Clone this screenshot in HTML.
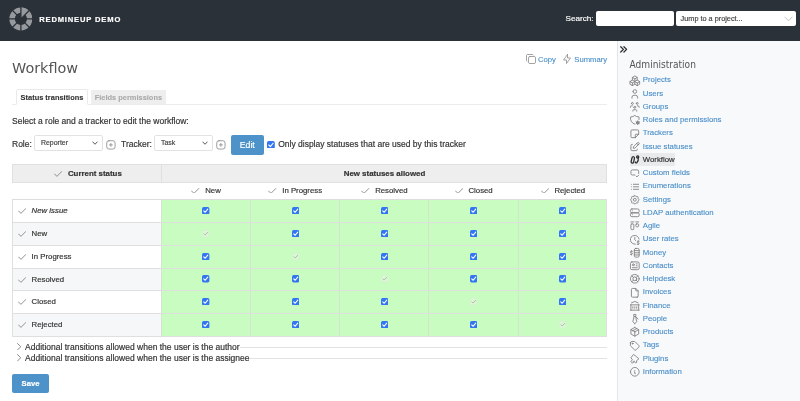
<!DOCTYPE html>
<html lang="en"><head><meta charset="utf-8"><title>Workflow - Redmineup Demo</title>
<style>
*{box-sizing:border-box;margin:0;padding:0}
html,body{width:800px;height:401px;overflow:hidden;background:#fff}
#wrap{position:absolute;left:0;top:0;width:800px;height:401px;will-change:transform;transform:translateZ(0)}
body{font-family:"Liberation Sans",Arial,sans-serif;font-size:8.500px;color:#333;position:relative;-webkit-text-stroke:.18px}
a{color:#478dc9;-webkit-text-stroke:.1px;text-decoration:none}
#header{position:absolute;left:0;top:0;width:800px;height:41px;background:#2b3138}
#logo{position:absolute;left:8.600px;top:7.100px}
#title{position:absolute;left:39.200px;top:13.900px;height:12px;line-height:12px;color:#fff;font-weight:bold;font-size:7.600px;letter-spacing:.830px;white-space:nowrap}
#slabel{position:absolute;left:565.600px;top:11.500px;height:14px;line-height:14px;color:#fff;font-size:8.100px}
#q{position:absolute;left:596px;top:11px;width:78px;height:15px;background:#fff;border-radius:2px}
#jump{position:absolute;left:676px;top:11px;width:120px;height:15px;background:#fff;border-radius:2px;font-size:7.300px;line-height:15px;padding-left:4.600px;color:#444}
#jump svg{position:absolute;right:3.500px;top:4.800px}
#sidebar{position:absolute;left:617px;top:41px;width:183px;height:360px;background:#f8f9fa;border-left:1px solid #e2e5e9}
#sidebar .tg{position:absolute;left:-.8px;top:2.100px}
#sidebar h3{position:absolute;left:11.500px;top:15.500px;font-family:"DejaVu Sans Condensed","DejaVu Sans","Liberation Sans",sans-serif;font-stretch:condensed;font-weight:normal;font-size:10.100px;line-height:16px;color:#555;-webkit-text-stroke:0}
#menu{position:absolute;left:12px;top:32px;list-style:none}
#menu li{height:14px;line-height:14px;white-space:nowrap;position:absolute;left:0;padding-left:12.800px;font-size:7.790px}
#menu li svg{position:absolute;left:-.7px;top:1px}
#menu li.cur span{background:#e8eaec;color:#333;padding:2.200px .8px 2.200px 13.300px;margin-left:-13.300px;border-radius:1px}
#menu li.cur svg{z-index:2}
h2{position:absolute;left:12px;top:56px;font-family:"DejaVu Sans","Liberation Sans",sans-serif;font-weight:normal;font-size:14.400px;line-height:24px;color:#555;-webkit-text-stroke:0}
#ctx{position:absolute;right:192.800px;top:52.500px;height:14px;line-height:14px;font-size:7.700px;white-space:nowrap}
#ctx a{margin-left:4.500px;position:relative;padding-left:13.900px;display:inline-block}
#ctx svg{position:absolute;left:.6px;top:.2px}
#tabs{position:absolute;left:12px;top:89px;width:595px;height:16px;border-bottom:1px solid #ececec}
#tabs a{position:absolute;top:0;height:16px;line-height:16px;font-weight:bold;font-size:7.450px;text-align:center;white-space:nowrap}
#tabs a.s{left:4px;width:72px;background:#fff;border:1px solid #eaeaea;border-bottom:1px solid #fff;color:#333;border-radius:2px 2px 0 0}
#tabs a.u{left:78.500px;width:75.800px;top:1px;background:#eee;color:#aaa;height:14px;line-height:15px;border-radius:1px 1px 0 0}
#p1{position:absolute;left:12px;top:113.500px;line-height:14px;white-space:nowrap}
.lab{position:absolute;top:137px;line-height:14px;white-space:nowrap}
.sel{position:absolute;top:135px;height:15.500px;border:1px solid #e2e2e2;border-radius:2px;background:#fff;font-size:6.950px;line-height:13.500px;padding-left:6px;color:#444}
.sel svg{position:absolute;right:4px;top:5px}
.plus{position:absolute;top:139.100px}
#edit{position:absolute;left:231px;top:135px;width:32.500px;height:19.500px;background:#4d92c9;border-radius:2px;color:#fff;font-size:8.700px;line-height:21px;text-align:center}
#only{position:absolute;left:267.300px;top:140.400px}
#tbl{position:absolute;left:12px;top:164px;width:595px;border-collapse:collapse}
.hr1{position:absolute;left:12px;top:164px;width:595px;height:18.500px;background:#eee;border:1px solid #e0e0e0}
.hr1 div{position:absolute;top:0;height:17px;line-height:17px;font-weight:bold;font-size:7.900px;text-align:center;white-space:nowrap;color:#333}
.hr2{position:absolute;top:181.600px;height:17px;line-height:17px;text-align:center;white-space:nowrap;font-size:7.800px}
.ck{vertical-align:-0.900px;margin-right:5.500px}
.row{position:absolute;left:12px;width:595px;border:1px solid #dfdfdf;border-top:none}
.row .st{position:absolute;left:0;top:0;width:149px;padding-left:4.800px;white-space:nowrap;font-size:7.800px}
.cell{position:absolute;top:0;background:#c9fcc1;border-left:1px solid #d3e4cf;border-top:0}
.cell svg{position:absolute;left:50%;margin-left:-3.700px}
.fs{position:absolute;left:12px;width:595px;height:1px;background:#e2e2e2}
.fl{position:absolute;left:12px;background:#fff;line-height:11px;height:11px;padding:0 .5px 0 5px;white-space:nowrap;font-size:8.500px}
.fl svg{margin-right:3.800px;vertical-align:-0.500px}
#save{position:absolute;left:12px;top:373.500px;width:37px;height:19.500px;background:#4d92c9;border-radius:2px;color:#fff;font-weight:bold;font-size:7.700px;line-height:19.500px;text-align:center}
</style></head><body><div id="wrap">

<div id="header"><svg id="logo" width="23.800" height="23.800" viewBox="0 0 25 25"><circle cx="12.5" cy="12.5" r="9.250" fill="none" stroke="#96999d" stroke-width="5.700"/><path d="M12.5 12.5L12.50 0.40A12.100 12.100 0 0 1 21.06 3.94Z" fill="#96999d"/><path d="M12.5 12.5L12.50 -1.00M12.5 12.5L22.05 2.95M12.5 12.5L26.00 12.50M12.5 12.5L22.05 22.05M12.5 12.5L12.50 26.00M12.5 12.5L2.95 22.05M12.5 12.5L-1.00 12.50M12.5 12.5L2.95 2.95" stroke="#2b3138" stroke-width="1.350" fill="none"/></svg>
<div id="title">REDMINEUP DEMO</div><div id="slabel">Search:</div><div id="q"></div><div id="jump">Jump to a project...<svg width="9" height="6" viewBox="0 0 9 6"><path d="M.6.800L4.500 4.800 8.400.800" fill="none" stroke="#b5b5b5" stroke-width=".8"/></svg></div></div>
<div id="sidebar"><svg class="tg" width="12.800" height="12.800" viewBox="0 0 24 24" fill="none" stroke="#2c2c2c" stroke-width="2.400" stroke-linecap="round" stroke-linejoin="round"><path d="M7 7l5 5-5 5M13 7l5 5-5 5"/></svg><h3>Administration</h3><ul id="menu">
<li style="top:0px"><svg width="11.600" height="11.600" viewBox="0 0 24 24" fill="none" stroke="#808080" stroke-width="1.850" stroke-linecap="round" stroke-linejoin="round" style="top:1.65px"><path d="M7 16.500l-5-3 5-3 5 3V19l-5 3zM2 13.500V19l5 3M7 16.545l5-3.030M17 16.500l-5-3 5-3 5 3V19l-5 3zM12 19l5 3M17 16.500l5-3M12 13.500V8L7 5l5-3 5 3v5.500M7 5.030v5.455M12 8l5-3"/></svg><a>Projects</a></li>
<li style="top:14px"><svg width="11.600" height="11.600" viewBox="0 0 24 24" fill="none" stroke="#808080" stroke-width="1.850" stroke-linecap="round" stroke-linejoin="round" style="top:0.90px"><path d="M8.200 7.200a3.800 3.800 0 1 0 7.600 0 3.800 3.800 0 0 0-7.600 0M6.200 21v-2a3.800 3.800 0 0 1 3.800-3.800h4a3.800 3.800 0 0 1 3.800 3.800v2"/></svg><a>Users</a></li>
<li style="top:27px"><svg width="11.600" height="11.600" viewBox="0 0 24 24" fill="none" stroke="#808080" stroke-width="1.850" stroke-linecap="round" stroke-linejoin="round" style="top:1.15px"><path d="M10 13a2 2 0 1 0 4 0 2 2 0 0 0-4 0M8 21v-1a2 2 0 0 1 2-2h4a2 2 0 0 1 2 2v1M15 5a2 2 0 1 0 4 0 2 2 0 0 0-4 0M17 10h2a2 2 0 0 1 2 2v1M5 5a2 2 0 1 0 4 0 2 2 0 0 0-4 0M3 13v-1a2 2 0 0 1 2-2h2"/></svg><a>Groups</a></li>
<li style="top:40px"><svg width="11.600" height="11.600" viewBox="0 0 24 24" fill="none" stroke="#808080" stroke-width="1.850" stroke-linecap="round" stroke-linejoin="round" style="top:1.40px"><path d="M12 21a12 12 0 0 1-8.500-15A12 12 0 0 0 12 3a12 12 0 0 0 8.500 3c.5 1.800.6 3.700.2 5.500"/><circle cx="18" cy="18" r="2.600" fill="#8a8a8a"/><path d="M18 14.200v1.200M18 20.600v1.200M21.300 16.100l-1 .6M15.700 19.300l-1 .6M14.700 16.100l1 .6M20.300 19.300l1 .6"/></svg><a>Roles and permissions</a></li>
<li style="top:53px"><svg width="11.600" height="11.600" viewBox="0 0 24 24" fill="none" stroke="#808080" stroke-width="1.850" stroke-linecap="round" stroke-linejoin="round" style="top:1.65px"><path d="M13 20l7-7M13 20v-6a1 1 0 0 1 1-1h6V6a2 2 0 0 0-2-2H6a2 2 0 0 0-2 2v12a2 2 0 0 0 2 2h7"/></svg><a>Trackers</a></li>
<li style="top:67px"><svg width="11.600" height="11.600" viewBox="0 0 24 24" fill="none" stroke="#808080" stroke-width="1.850" stroke-linecap="round" stroke-linejoin="round" style="top:0.90px"><path d="M7 7H6a2 2 0 0 0-2 2v9a2 2 0 0 0 2 2h9a2 2 0 0 0 2-2v-1M20.385 6.585a2.100 2.100 0 0 0-2.970-2.970L9 12v3h3l8.385-8.415zM16 5l3 3"/></svg><a>Issue statuses</a></li>
<li class="cur" style="top:80px"><svg width="11.600" height="11.600" viewBox="0 0 24 24" fill="none" stroke="#2c2c2c" stroke-width="2.900" stroke-linecap="round" stroke-linejoin="round" style="top:1.15px"><g transform="translate(1.800 1) scale(.9)"><path d="M8.400 5.200c1.700.4 2.500 2 2.100 3.800l-1.900 8.400c-.4 1.800-2 2.900-3.600 2.500s-2.400-2-2-3.800l1.900-8.400c.4-1.800 1.900-2.900 3.500-2.500z"/><circle cx="18" cy="5.600" r="2.500"/><path d="M19.300 8c.6 4-.8 8.800-3.300 10.800-1.500 1.100-3.200.3-3.600-1.500"/></g></svg><span>Workflow</span></li>
<li style="top:93px"><svg width="11.600" height="11.600" viewBox="0 0 24 24" fill="none" stroke="#808080" stroke-width="1.850" stroke-linecap="round" stroke-linejoin="round" style="top:1.40px"><path d="M12 16.500H7a3 3 0 0 1-3-3V9a3 3 0 0 1 3-3h10a3 3 0 0 1 3 3v4.500M14.500 18.500l2 2 3.500-3.500"/></svg><a>Custom fields</a></li>
<li style="top:106px"><svg width="11.600" height="11.600" viewBox="0 0 24 24" fill="none" stroke="#808080" stroke-width="1.850" stroke-linecap="round" stroke-linejoin="round" style="top:1.65px"><path d="M9 6.800h11M9 12h11M9 17.200h11M5 6.800v.010M5 12v.010M5 17.200v.010"/></svg><a>Enumerations</a></li>
<li style="top:120px"><svg width="11.600" height="11.600" viewBox="0 0 24 24" fill="none" stroke="#808080" stroke-width="1.850" stroke-linecap="round" stroke-linejoin="round" style="top:0.90px"><path d="M10.325 4.317c.426-1.756 2.924-1.756 3.350 0a1.724 1.724 0 0 0 2.573 1.066c1.543-.940 3.310.826 2.370 2.370a1.724 1.724 0 0 0 1.065 2.572c1.756.426 1.756 2.924 0 3.350a1.724 1.724 0 0 0-1.066 2.573c.940 1.543-.826 3.310-2.370 2.370a1.724 1.724 0 0 0-2.572 1.065c-.426 1.756-2.924 1.756-3.350 0a1.724 1.724 0 0 0-2.573-1.066c-1.543.940-3.310-.826-2.370-2.370a1.724 1.724 0 0 0-1.065-2.572c-1.756-.426-1.756-2.924 0-3.350a1.724 1.724 0 0 0 1.066-2.573c-.940-1.543.826-3.310 2.370-2.370 1 .608 2.296.070 2.572-1.065z"/><path d="M9 12a3 3 0 1 0 6 0 3 3 0 0 0-6 0"/></svg><a>Settings</a></li>
<li style="top:133px"><svg width="11.600" height="11.600" viewBox="0 0 24 24" fill="none" stroke="#808080" stroke-width="1.850" stroke-linecap="round" stroke-linejoin="round" style="top:1.15px"><rect x="3" y="4" width="18" height="8" rx="3"/><rect x="3" y="12" width="18" height="8" rx="3"/><path d="M7 8v.010M7 16v.010"/></svg><a>LDAP authentication</a></li>
<li style="top:146px"><svg width="11.600" height="11.600" viewBox="0 0 24 24" fill="none" stroke="#808080" stroke-width="1.850" stroke-linecap="round" stroke-linejoin="round" style="top:1.40px"><path d="M4 4h6M14 4h6"/><rect x="4" y="8" width="6" height="12" rx="2"/><rect x="14" y="8" width="6" height="6" rx="2"/></svg><a>Agile</a></li>
<li style="top:159px"><svg width="11.600" height="11.600" viewBox="0 0 24 24" fill="none" stroke="#808080" stroke-width="1.850" stroke-linecap="round" stroke-linejoin="round" style="top:1.65px"><path d="M20.866 10.450A9 9 0 1 0 13.051 20.938M12 7v5l1.500 1.500M21 15h-2.500a1.500 1.500 0 0 0 0 3h1a1.500 1.500 0 0 1 0 3H17M19 21v1m0-8v1"/></svg><a>User rates</a></li>
<li style="top:173px"><svg width="11.600" height="11.600" viewBox="0 0 24 24" fill="none" stroke="#808080" stroke-width="1.850" stroke-linecap="round" stroke-linejoin="round" style="top:0.90px"><path d="M7 9H4.500a1.500 1.500 0 0 0 0 3h1a1.500 1.500 0 0 1 0 3H3M5 15v1.500M5 7.500V9"/><rect x="11" y="3" width="10" height="18" rx="3"/><path d="M11 7.500h10M11 12h10M11 16.500h10"/></svg><a>Money</a></li>
<li style="top:186px"><svg width="11.600" height="11.600" viewBox="0 0 24 24" fill="none" stroke="#808080" stroke-width="1.850" stroke-linecap="round" stroke-linejoin="round" style="top:1.15px"><rect x="3" y="4" width="18" height="16" rx="3"/><circle cx="9" cy="10" r="2"/><path d="M15 8h2M15 12h2M7 16h10"/></svg><a>Contacts</a></li>
<li style="top:199px"><svg width="11.600" height="11.600" viewBox="0 0 24 24" fill="none" stroke="#808080" stroke-width="1.850" stroke-linecap="round" stroke-linejoin="round" style="top:1.40px"><circle cx="12" cy="12" r="4"/><circle cx="12" cy="12" r="9"/><path d="M15 15l3.350 3.350M9 15l-3.350 3.350M5.650 5.650L9 9M18.350 5.650L15 9"/></svg><a>Helpdesk</a></li>
<li style="top:212px"><svg width="11.600" height="11.600" viewBox="0 0 24 24" fill="none" stroke="#808080" stroke-width="1.850" stroke-linecap="round" stroke-linejoin="round" style="top:1.65px"><path d="M14 3v4a1 1 0 0 0 1 1h4M17 21H7a2 2 0 0 1-2-2V5a2 2 0 0 1 2-2h7l5 5v11a2 2 0 0 1-2 2z"/></svg><a>Invoices</a></li>
<li style="top:226px"><svg width="11.600" height="11.600" viewBox="0 0 24 24" fill="none" stroke="#808080" stroke-width="1.850" stroke-linecap="round" stroke-linejoin="round" style="top:0.90px"><path d="M3 21h18M3 10h18M5 6l7-3 7 3M4 10v11M20 10v11M8 14v3M12 14v3M16 14v3"/></svg><a>Finance</a></li>
<li style="top:239px"><svg width="11.600" height="11.600" viewBox="0 0 24 24" fill="none" stroke="#808080" stroke-width="1.850" stroke-linecap="round" stroke-linejoin="round" style="top:1.15px"><path d="M12 22l4-4-2.500-11 .993-2.649A1 1 0 0 0 13.557 3h-3.114a1 1 0 0 0-.936 1.351L10.500 7 8 18l4 4zM10.500 7h3l5 5.500"/></svg><a>People</a></li>
<li style="top:252px"><svg width="11.600" height="11.600" viewBox="0 0 24 24" fill="none" stroke="#808080" stroke-width="1.850" stroke-linecap="round" stroke-linejoin="round" style="top:1.40px"><path d="M12 3l8 4.500v9L12 21l-8-4.500v-9L12 3M12 12l8-4.500M12 12v9M12 12L4 7.500M16 5.250l-8 4.500"/></svg><a>Products</a></li>
<li style="top:265px"><svg width="11.600" height="11.600" viewBox="0 0 24 24" fill="none" stroke="#808080" stroke-width="1.850" stroke-linecap="round" stroke-linejoin="round" style="top:1.65px"><circle cx="7.500" cy="7.500" r="1"/><path d="M3 6v5.172a2 2 0 0 0 .586 1.414l7.710 7.710a2.410 2.410 0 0 0 3.408 0l5.592-5.592a2.410 2.410 0 0 0 0-3.408l-7.710-7.710A2 2 0 0 0 11.172 3H6a3 3 0 0 0-3 3z"/></svg><a>Tags</a></li>
<li style="top:279px"><svg width="11.600" height="11.600" viewBox="0 0 24 24" fill="none" stroke="#808080" stroke-width="1.850" stroke-linecap="round" stroke-linejoin="round" style="top:0.90px"><path d="M10 3.500l3.500 2.500 7 6-5 4 .5 3.500c-2.500 1.500-4.500.5-5-2.500l-2.500.500.5 2.500c-2.500 1.500-5 0-5-2.500l3-3.500-2.500-3.500z"/></svg><a>Plugins</a></li>
<li style="top:292px"><svg width="11.600" height="11.600" viewBox="0 0 24 24" fill="none" stroke="#808080" stroke-width="1.850" stroke-linecap="round" stroke-linejoin="round" style="top:1.15px"><path d="M3 12a9 9 0 1 0 18 0 9 9 0 0 0-18 0M12 9h.010M11 12h1v4h1"/></svg><a>Information</a></li>
</ul></div>
<h2>Workflow</h2>
<div id="ctx"><a><svg width="12" height="12" viewBox="0 0 24 24" fill="none" stroke="#8c8c8c" stroke-width="1.600" stroke-linecap="round" stroke-linejoin="round"><rect x="7" y="7" width="14" height="14" rx="2.667"/><path d="M4.012 16.737A2.005 2.005 0 0 1 3 15V5c0-1.100.9-2 2-2h10c.750 0 1.158.385 1.500 1"/></svg>Copy</a><a><svg width="12" height="12" viewBox="0 0 24 24" fill="none" stroke="#8c8c8c" stroke-width="1.600" stroke-linecap="round" stroke-linejoin="round"><path d="M13 3v7h6l-8 11v-7H5l8-11"/></svg>Summary</a></div>
<div id="tabs"><a class="s">Status transitions</a><a class="u">Fields permissions</a></div>
<div id="p1">Select a role and a tracker to edit the workflow:</div>
<div class="lab" style="left:12px">Role:</div><div class="sel" style="left:34px;width:68.500px">Reporter<svg width="6" height="4.300" viewBox="0 0 7 5"><path d="M.6.800L3.500 3.800 6.400.800" fill="none" stroke="#444" stroke-width="1.050"/></svg></div><svg class="plus" style="left:104.6px" width="11.800" height="11.800" viewBox="0 0 24 24" fill="none" stroke="#858585" stroke-width="1.600" stroke-linecap="round" stroke-linejoin="round"><rect x="3.500" y="3.500" width="17" height="17" rx="4.500"/><path d="M15 12H9M12 9v6"/></svg>
<div class="lab" style="left:121px">Tracker:</div><div class="sel" style="left:154px;width:58.500px">Task<svg width="6" height="4.300" viewBox="0 0 7 5"><path d="M.6.800L3.500 3.800 6.400.800" fill="none" stroke="#444" stroke-width="1.050"/></svg></div><svg class="plus" style="left:214.6px" width="11.800" height="11.800" viewBox="0 0 24 24" fill="none" stroke="#858585" stroke-width="1.600" stroke-linecap="round" stroke-linejoin="round"><rect x="3.500" y="3.500" width="17" height="17" rx="4.500"/><path d="M15 12H9M12 9v6"/></svg>
<div id="edit">Edit</div>
<div id="only"><svg class="cb" viewBox="0 0 9 9" width="7.800" height="7.800"><rect x="0" y="0" width="9" height="9" rx="2" fill="#3376f2"/><path d="M2.100 4.600L3.900 6.400 7 2.600" fill="none" stroke="#fff" stroke-width="1.300" stroke-linecap="round" stroke-linejoin="round"/></svg></div><div class="lab" style="left:278.200px">Only display statuses that are used by this tracker</div>
<div class="hr1"><div style="left:0;width:149.400px;border-right:1px solid #e0e0e0;height:17.500px;padding-left:1.500px;line-height:17.800px"><svg class="ck" viewBox="4 6 17 12" width="8.300" height="5.860"><path d="M5 12l5 5L20 7" fill="none" stroke="#7c7c7c" stroke-width="1.750" stroke-linecap="round" stroke-linejoin="round"/></svg>Current status</div><div style="left:149px;width:445px;line-height:17.800px">New statuses allowed</div></div>
<div class="hr2" style="left:161.50px;width:89.200px"><svg class="ck" viewBox="4 6 17 12" width="8.300" height="5.860"><path d="M5 12l5 5L20 7" fill="none" stroke="#7c7c7c" stroke-width="1.750" stroke-linecap="round" stroke-linejoin="round"/></svg>New</div>
<div class="hr2" style="left:250.70px;width:89.200px"><svg class="ck" viewBox="4 6 17 12" width="8.300" height="5.860"><path d="M5 12l5 5L20 7" fill="none" stroke="#7c7c7c" stroke-width="1.750" stroke-linecap="round" stroke-linejoin="round"/></svg>In Progress</div>
<div class="hr2" style="left:339.90px;width:89.200px"><svg class="ck" viewBox="4 6 17 12" width="8.300" height="5.860"><path d="M5 12l5 5L20 7" fill="none" stroke="#7c7c7c" stroke-width="1.750" stroke-linecap="round" stroke-linejoin="round"/></svg>Resolved</div>
<div class="hr2" style="left:429.10px;width:89.200px"><svg class="ck" viewBox="4 6 17 12" width="8.300" height="5.860"><path d="M5 12l5 5L20 7" fill="none" stroke="#7c7c7c" stroke-width="1.750" stroke-linecap="round" stroke-linejoin="round"/></svg>Closed</div>
<div class="hr2" style="left:518.30px;width:89.200px"><svg class="ck" viewBox="4 6 17 12" width="8.300" height="5.860"><path d="M5 12l5 5L20 7" fill="none" stroke="#7c7c7c" stroke-width="1.750" stroke-linecap="round" stroke-linejoin="round"/></svg>Rejected</div>
<div style="position:absolute;left:12px;top:199px;width:595px;height:1px;background:#ddd"></div>
<div class="row" style="top:200px;height:23px;background:#fff"><div class="st" style="line-height:22.00px"><svg class="ck" viewBox="4 6 17 12" width="8.300" height="5.860"><path d="M5 12l5 5L20 7" fill="none" stroke="#7c7c7c" stroke-width="1.750" stroke-linecap="round" stroke-linejoin="round"/></svg><i>New issue</i></div><div class="cell" style="left:148.00px;width:89.15px;height:22px"><span style="position:absolute;left:0;right:0;top:6.80px"><svg class="cb" viewBox="0 0 9 9" width="7.400" height="7.400"><rect x="0" y="0" width="9" height="9" rx="2" fill="#3376f2"/><path d="M2.100 4.600L3.900 6.400 7 2.600" fill="none" stroke="#fff" stroke-width="1.300" stroke-linecap="round" stroke-linejoin="round"/></svg></span></div><div class="cell" style="left:237.15px;width:89.15px;height:22px"><span style="position:absolute;left:0;right:0;top:6.80px"><svg class="cb" viewBox="0 0 9 9" width="7.400" height="7.400"><rect x="0" y="0" width="9" height="9" rx="2" fill="#3376f2"/><path d="M2.100 4.600L3.900 6.400 7 2.600" fill="none" stroke="#fff" stroke-width="1.300" stroke-linecap="round" stroke-linejoin="round"/></svg></span></div><div class="cell" style="left:326.30px;width:89.15px;height:22px"><span style="position:absolute;left:0;right:0;top:6.80px"><svg class="cb" viewBox="0 0 9 9" width="7.400" height="7.400"><rect x="0" y="0" width="9" height="9" rx="2" fill="#3376f2"/><path d="M2.100 4.600L3.900 6.400 7 2.600" fill="none" stroke="#fff" stroke-width="1.300" stroke-linecap="round" stroke-linejoin="round"/></svg></span></div><div class="cell" style="left:415.45px;width:89.15px;height:22px"><span style="position:absolute;left:0;right:0;top:6.80px"><svg class="cb" viewBox="0 0 9 9" width="7.400" height="7.400"><rect x="0" y="0" width="9" height="9" rx="2" fill="#3376f2"/><path d="M2.100 4.600L3.900 6.400 7 2.600" fill="none" stroke="#fff" stroke-width="1.300" stroke-linecap="round" stroke-linejoin="round"/></svg></span></div><div class="cell" style="left:504.60px;width:88.40px;height:22px"><span style="position:absolute;left:0;right:0;top:6.80px"><svg class="cb" viewBox="0 0 9 9" width="7.400" height="7.400"><rect x="0" y="0" width="9" height="9" rx="2" fill="#3376f2"/><path d="M2.100 4.600L3.900 6.400 7 2.600" fill="none" stroke="#fff" stroke-width="1.300" stroke-linecap="round" stroke-linejoin="round"/></svg></span></div></div>
<div class="row" style="top:223px;height:23px;background:#f6f7f8"><div class="st" style="line-height:22.00px"><svg class="ck" viewBox="4 6 17 12" width="8.300" height="5.860"><path d="M5 12l5 5L20 7" fill="none" stroke="#7c7c7c" stroke-width="1.750" stroke-linecap="round" stroke-linejoin="round"/></svg>New</div><div class="cell" style="left:148.00px;width:89.15px;height:22px"><span style="position:absolute;left:0;right:0;top:6.80px"><svg class="cb" viewBox="0 0 9 9" width="7.400" height="7.400"><rect x="0.250" y="0.250" width="8.500" height="8.500" rx="2" fill="#dcf6d7" stroke="#cfe8ca" stroke-width=".5"/><path d="M2.300 4.600L3.900 6.200 6.800 2.800" fill="none" stroke="#9db89a" stroke-width="1" stroke-linecap="round" stroke-linejoin="round"/></svg></span></div><div class="cell" style="left:237.15px;width:89.15px;height:22px"><span style="position:absolute;left:0;right:0;top:6.80px"><svg class="cb" viewBox="0 0 9 9" width="7.400" height="7.400"><rect x="0" y="0" width="9" height="9" rx="2" fill="#3376f2"/><path d="M2.100 4.600L3.900 6.400 7 2.600" fill="none" stroke="#fff" stroke-width="1.300" stroke-linecap="round" stroke-linejoin="round"/></svg></span></div><div class="cell" style="left:326.30px;width:89.15px;height:22px"><span style="position:absolute;left:0;right:0;top:6.80px"><svg class="cb" viewBox="0 0 9 9" width="7.400" height="7.400"><rect x="0" y="0" width="9" height="9" rx="2" fill="#3376f2"/><path d="M2.100 4.600L3.900 6.400 7 2.600" fill="none" stroke="#fff" stroke-width="1.300" stroke-linecap="round" stroke-linejoin="round"/></svg></span></div><div class="cell" style="left:415.45px;width:89.15px;height:22px"><span style="position:absolute;left:0;right:0;top:6.80px"><svg class="cb" viewBox="0 0 9 9" width="7.400" height="7.400"><rect x="0" y="0" width="9" height="9" rx="2" fill="#3376f2"/><path d="M2.100 4.600L3.900 6.400 7 2.600" fill="none" stroke="#fff" stroke-width="1.300" stroke-linecap="round" stroke-linejoin="round"/></svg></span></div><div class="cell" style="left:504.60px;width:88.40px;height:22px"><span style="position:absolute;left:0;right:0;top:6.80px"><svg class="cb" viewBox="0 0 9 9" width="7.400" height="7.400"><rect x="0" y="0" width="9" height="9" rx="2" fill="#3376f2"/><path d="M2.100 4.600L3.900 6.400 7 2.600" fill="none" stroke="#fff" stroke-width="1.300" stroke-linecap="round" stroke-linejoin="round"/></svg></span></div></div>
<div class="row" style="top:246px;height:23px;background:#fff"><div class="st" style="line-height:22.00px"><svg class="ck" viewBox="4 6 17 12" width="8.300" height="5.860"><path d="M5 12l5 5L20 7" fill="none" stroke="#7c7c7c" stroke-width="1.750" stroke-linecap="round" stroke-linejoin="round"/></svg>In Progress</div><div class="cell" style="left:148.00px;width:89.15px;height:22px"><span style="position:absolute;left:0;right:0;top:6.80px"><svg class="cb" viewBox="0 0 9 9" width="7.400" height="7.400"><rect x="0" y="0" width="9" height="9" rx="2" fill="#3376f2"/><path d="M2.100 4.600L3.900 6.400 7 2.600" fill="none" stroke="#fff" stroke-width="1.300" stroke-linecap="round" stroke-linejoin="round"/></svg></span></div><div class="cell" style="left:237.15px;width:89.15px;height:22px"><span style="position:absolute;left:0;right:0;top:6.80px"><svg class="cb" viewBox="0 0 9 9" width="7.400" height="7.400"><rect x="0.250" y="0.250" width="8.500" height="8.500" rx="2" fill="#dcf6d7" stroke="#cfe8ca" stroke-width=".5"/><path d="M2.300 4.600L3.900 6.200 6.800 2.800" fill="none" stroke="#9db89a" stroke-width="1" stroke-linecap="round" stroke-linejoin="round"/></svg></span></div><div class="cell" style="left:326.30px;width:89.15px;height:22px"><span style="position:absolute;left:0;right:0;top:6.80px"><svg class="cb" viewBox="0 0 9 9" width="7.400" height="7.400"><rect x="0" y="0" width="9" height="9" rx="2" fill="#3376f2"/><path d="M2.100 4.600L3.900 6.400 7 2.600" fill="none" stroke="#fff" stroke-width="1.300" stroke-linecap="round" stroke-linejoin="round"/></svg></span></div><div class="cell" style="left:415.45px;width:89.15px;height:22px"><span style="position:absolute;left:0;right:0;top:6.80px"><svg class="cb" viewBox="0 0 9 9" width="7.400" height="7.400"><rect x="0" y="0" width="9" height="9" rx="2" fill="#3376f2"/><path d="M2.100 4.600L3.900 6.400 7 2.600" fill="none" stroke="#fff" stroke-width="1.300" stroke-linecap="round" stroke-linejoin="round"/></svg></span></div><div class="cell" style="left:504.60px;width:88.40px;height:22px"><span style="position:absolute;left:0;right:0;top:6.80px"><svg class="cb" viewBox="0 0 9 9" width="7.400" height="7.400"><rect x="0" y="0" width="9" height="9" rx="2" fill="#3376f2"/><path d="M2.100 4.600L3.900 6.400 7 2.600" fill="none" stroke="#fff" stroke-width="1.300" stroke-linecap="round" stroke-linejoin="round"/></svg></span></div></div>
<div class="row" style="top:269px;height:22px;background:#f6f7f8"><div class="st" style="line-height:21.00px"><svg class="ck" viewBox="4 6 17 12" width="8.300" height="5.860"><path d="M5 12l5 5L20 7" fill="none" stroke="#7c7c7c" stroke-width="1.750" stroke-linecap="round" stroke-linejoin="round"/></svg>Resolved</div><div class="cell" style="left:148.00px;width:89.15px;height:21px"><span style="position:absolute;left:0;right:0;top:6.30px"><svg class="cb" viewBox="0 0 9 9" width="7.400" height="7.400"><rect x="0" y="0" width="9" height="9" rx="2" fill="#3376f2"/><path d="M2.100 4.600L3.900 6.400 7 2.600" fill="none" stroke="#fff" stroke-width="1.300" stroke-linecap="round" stroke-linejoin="round"/></svg></span></div><div class="cell" style="left:237.15px;width:89.15px;height:21px"><span style="position:absolute;left:0;right:0;top:6.30px"><svg class="cb" viewBox="0 0 9 9" width="7.400" height="7.400"><rect x="0" y="0" width="9" height="9" rx="2" fill="#3376f2"/><path d="M2.100 4.600L3.900 6.400 7 2.600" fill="none" stroke="#fff" stroke-width="1.300" stroke-linecap="round" stroke-linejoin="round"/></svg></span></div><div class="cell" style="left:326.30px;width:89.15px;height:21px"><span style="position:absolute;left:0;right:0;top:6.30px"><svg class="cb" viewBox="0 0 9 9" width="7.400" height="7.400"><rect x="0.250" y="0.250" width="8.500" height="8.500" rx="2" fill="#dcf6d7" stroke="#cfe8ca" stroke-width=".5"/><path d="M2.300 4.600L3.900 6.200 6.800 2.800" fill="none" stroke="#9db89a" stroke-width="1" stroke-linecap="round" stroke-linejoin="round"/></svg></span></div><div class="cell" style="left:415.45px;width:89.15px;height:21px"><span style="position:absolute;left:0;right:0;top:6.30px"><svg class="cb" viewBox="0 0 9 9" width="7.400" height="7.400"><rect x="0" y="0" width="9" height="9" rx="2" fill="#3376f2"/><path d="M2.100 4.600L3.900 6.400 7 2.600" fill="none" stroke="#fff" stroke-width="1.300" stroke-linecap="round" stroke-linejoin="round"/></svg></span></div><div class="cell" style="left:504.60px;width:88.40px;height:21px"><span style="position:absolute;left:0;right:0;top:6.30px"><svg class="cb" viewBox="0 0 9 9" width="7.400" height="7.400"><rect x="0" y="0" width="9" height="9" rx="2" fill="#3376f2"/><path d="M2.100 4.600L3.900 6.400 7 2.600" fill="none" stroke="#fff" stroke-width="1.300" stroke-linecap="round" stroke-linejoin="round"/></svg></span></div></div>
<div class="row" style="top:291px;height:23px;background:#fff"><div class="st" style="line-height:22.00px"><svg class="ck" viewBox="4 6 17 12" width="8.300" height="5.860"><path d="M5 12l5 5L20 7" fill="none" stroke="#7c7c7c" stroke-width="1.750" stroke-linecap="round" stroke-linejoin="round"/></svg>Closed</div><div class="cell" style="left:148.00px;width:89.15px;height:22px"><span style="position:absolute;left:0;right:0;top:6.80px"><svg class="cb" viewBox="0 0 9 9" width="7.400" height="7.400"><rect x="0" y="0" width="9" height="9" rx="2" fill="#3376f2"/><path d="M2.100 4.600L3.900 6.400 7 2.600" fill="none" stroke="#fff" stroke-width="1.300" stroke-linecap="round" stroke-linejoin="round"/></svg></span></div><div class="cell" style="left:237.15px;width:89.15px;height:22px"><span style="position:absolute;left:0;right:0;top:6.80px"><svg class="cb" viewBox="0 0 9 9" width="7.400" height="7.400"><rect x="0" y="0" width="9" height="9" rx="2" fill="#3376f2"/><path d="M2.100 4.600L3.900 6.400 7 2.600" fill="none" stroke="#fff" stroke-width="1.300" stroke-linecap="round" stroke-linejoin="round"/></svg></span></div><div class="cell" style="left:326.30px;width:89.15px;height:22px"><span style="position:absolute;left:0;right:0;top:6.80px"><svg class="cb" viewBox="0 0 9 9" width="7.400" height="7.400"><rect x="0" y="0" width="9" height="9" rx="2" fill="#3376f2"/><path d="M2.100 4.600L3.900 6.400 7 2.600" fill="none" stroke="#fff" stroke-width="1.300" stroke-linecap="round" stroke-linejoin="round"/></svg></span></div><div class="cell" style="left:415.45px;width:89.15px;height:22px"><span style="position:absolute;left:0;right:0;top:6.80px"><svg class="cb" viewBox="0 0 9 9" width="7.400" height="7.400"><rect x="0.250" y="0.250" width="8.500" height="8.500" rx="2" fill="#dcf6d7" stroke="#cfe8ca" stroke-width=".5"/><path d="M2.300 4.600L3.900 6.200 6.800 2.800" fill="none" stroke="#9db89a" stroke-width="1" stroke-linecap="round" stroke-linejoin="round"/></svg></span></div><div class="cell" style="left:504.60px;width:88.40px;height:22px"><span style="position:absolute;left:0;right:0;top:6.80px"><svg class="cb" viewBox="0 0 9 9" width="7.400" height="7.400"><rect x="0" y="0" width="9" height="9" rx="2" fill="#3376f2"/><path d="M2.100 4.600L3.900 6.400 7 2.600" fill="none" stroke="#fff" stroke-width="1.300" stroke-linecap="round" stroke-linejoin="round"/></svg></span></div></div>
<div class="row" style="top:314px;height:23px;background:#f6f7f8"><div class="st" style="line-height:22.00px"><svg class="ck" viewBox="4 6 17 12" width="8.300" height="5.860"><path d="M5 12l5 5L20 7" fill="none" stroke="#7c7c7c" stroke-width="1.750" stroke-linecap="round" stroke-linejoin="round"/></svg>Rejected</div><div class="cell" style="left:148.00px;width:89.15px;height:22px"><span style="position:absolute;left:0;right:0;top:6.80px"><svg class="cb" viewBox="0 0 9 9" width="7.400" height="7.400"><rect x="0" y="0" width="9" height="9" rx="2" fill="#3376f2"/><path d="M2.100 4.600L3.900 6.400 7 2.600" fill="none" stroke="#fff" stroke-width="1.300" stroke-linecap="round" stroke-linejoin="round"/></svg></span></div><div class="cell" style="left:237.15px;width:89.15px;height:22px"><span style="position:absolute;left:0;right:0;top:6.80px"><svg class="cb" viewBox="0 0 9 9" width="7.400" height="7.400"><rect x="0" y="0" width="9" height="9" rx="2" fill="#3376f2"/><path d="M2.100 4.600L3.900 6.400 7 2.600" fill="none" stroke="#fff" stroke-width="1.300" stroke-linecap="round" stroke-linejoin="round"/></svg></span></div><div class="cell" style="left:326.30px;width:89.15px;height:22px"><span style="position:absolute;left:0;right:0;top:6.80px"><svg class="cb" viewBox="0 0 9 9" width="7.400" height="7.400"><rect x="0" y="0" width="9" height="9" rx="2" fill="#3376f2"/><path d="M2.100 4.600L3.900 6.400 7 2.600" fill="none" stroke="#fff" stroke-width="1.300" stroke-linecap="round" stroke-linejoin="round"/></svg></span></div><div class="cell" style="left:415.45px;width:89.15px;height:22px"><span style="position:absolute;left:0;right:0;top:6.80px"><svg class="cb" viewBox="0 0 9 9" width="7.400" height="7.400"><rect x="0" y="0" width="9" height="9" rx="2" fill="#3376f2"/><path d="M2.100 4.600L3.900 6.400 7 2.600" fill="none" stroke="#fff" stroke-width="1.300" stroke-linecap="round" stroke-linejoin="round"/></svg></span></div><div class="cell" style="left:504.60px;width:88.40px;height:22px"><span style="position:absolute;left:0;right:0;top:6.80px"><svg class="cb" viewBox="0 0 9 9" width="7.400" height="7.400"><rect x="0.250" y="0.250" width="8.500" height="8.500" rx="2" fill="#dcf6d7" stroke="#cfe8ca" stroke-width=".5"/><path d="M2.300 4.600L3.900 6.200 6.800 2.800" fill="none" stroke="#9db89a" stroke-width="1" stroke-linecap="round" stroke-linejoin="round"/></svg></span></div></div>
<div class="fs" style="top:347px"></div><div class="fl" style="top:341.500px"><svg width="4.270" height="7.470" viewBox="8 5 8 14"><path d="M9 6l6 6-6 6" fill="none" stroke="#777" stroke-width="1.600" stroke-linecap="round" stroke-linejoin="round"/></svg>Additional transitions allowed when the user is the author</div>
<div class="fs" style="top:358px"></div><div class="fl" style="top:353px"><svg width="4.270" height="7.470" viewBox="8 5 8 14"><path d="M9 6l6 6-6 6" fill="none" stroke="#777" stroke-width="1.600" stroke-linecap="round" stroke-linejoin="round"/></svg>Additional transitions allowed when the user is the assignee</div>
<div id="save">Save</div>
</div></body></html>
